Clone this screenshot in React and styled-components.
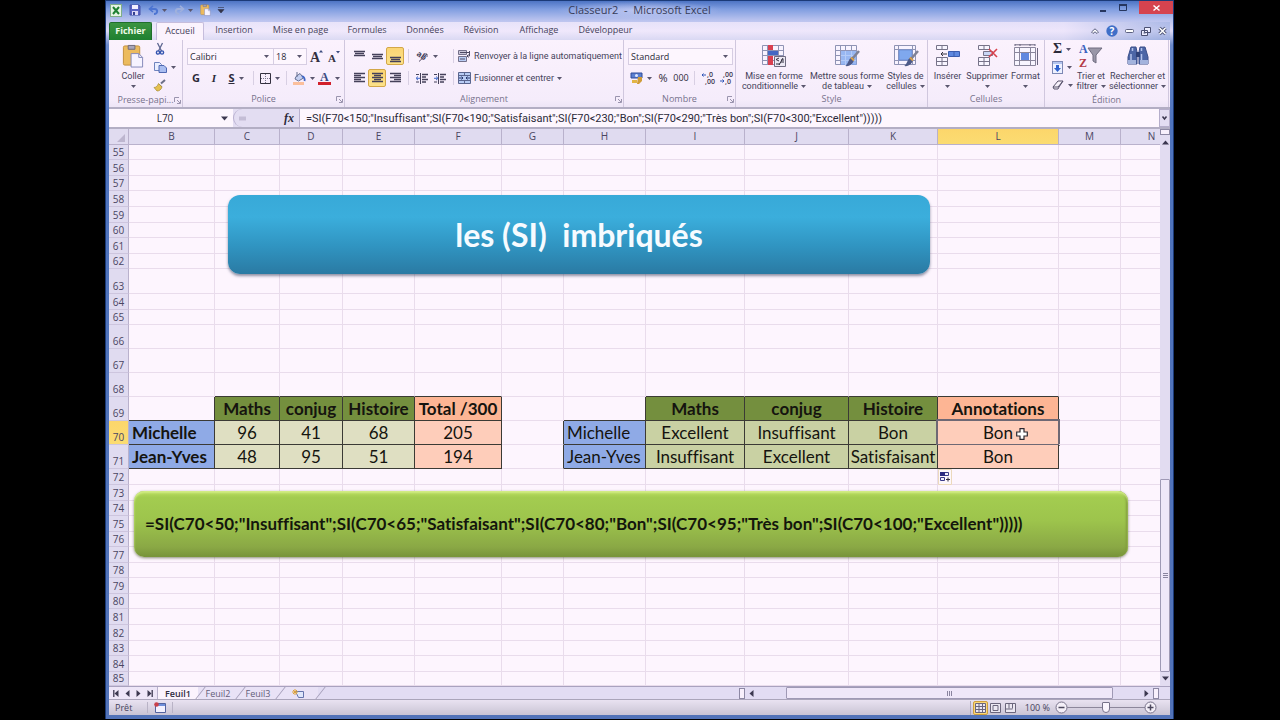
import React from 'react';
import styled, { createGlobalStyle, css } from 'styled-components';

const UI = '"Open Sans", "Noto Sans", sans-serif';
const LABEL = 'Roboto, "Open Sans", sans-serif';
const CALIBRI = 'Lato, "Open Sans", sans-serif';

const Global = createGlobalStyle`
  * { box-sizing: border-box; }
  html, body { margin: 0; background: #000; }
  body { font-family: ${UI}; font-size: 9px; color: #45425a; font-variant-ligatures: none; }
  button, input, select {
    font: inherit; color: inherit; margin: 0; padding: 0;
    border: 0; background: none; border-radius: 0; outline: 0;
  }
  svg { display: block; flex: none; overflow: visible; }
`;

/* ---------- frame ---------- */

const Stage = styled.div`
  min-height: 100vh;
  padding: 0 106px 1px 105px;
  background: #000;
  display: flex;
`;

const Window = styled.main`
  flex: 1;
  min-width: 0;
  display: flex;
  flex-direction: column;
  border: solid #1b3a78;
  border-width: 1px 1px 0;
  background: linear-gradient(#4d74c4 0, #7f9de0 8px, #b9c2ee 19px, #ded9f6 30px, #6c8aca 44px, #4f74be 120px, #5273b8);
`;

const TitleBar = styled.header`
  height: 21px;
  display: grid;
  grid-template-columns: 1fr auto 1fr;
  align-items: start;
`;

const QuickAccess = styled.div`
  display: flex;
  align-items: center;
  gap: 7px;
  height: 18px;
  padding-left: 4px;
`;

const Title = styled.h1`
  margin: 0;
  padding: 0 12px;
  font-size: 11px;
  font-weight: 400;
  line-height: 18px;
  white-space: pre;
  color: #363b58;
  background: radial-gradient(closest-side, rgba(225, 222, 250, 0.6), rgba(225, 222, 250, 0));
`;

const WindowButtons = styled.div`
  display: flex;
  justify-content: flex-end;
  align-items: center;
  height: 13px;
  gap: 12px;
`;

const PlainButton = styled.button`
  display: flex;
  align-items: center;
  justify-content: center;
  gap: 3px;
`;

const CloseButton = styled(PlainButton)`
  width: 34px;
  height: 13px;
  background: #d5434f;
`;

const Inner = styled.div`
  flex: 1;
  display: flex;
  flex-direction: column;
  padding: 0 3px 4px;
`;

/* ---------- ribbon ---------- */

const TabRow = styled.nav`
  display: flex;
  align-items: stretch;
  height: 18px;
  background: linear-gradient(90deg, rgba(250, 241, 254, 0.7), rgba(244, 235, 253, 0.7) 90%, rgba(160, 178, 226, 0.6));
`;

const tabKinds = {
  file: css`
    margin-right: 4px;
    color: #f1fbe9;
    font-weight: 700;
    background: linear-gradient(#3b9440, #1f8030);
    border: 1px solid #1f6f2b;
    border-bottom: 0;
    border-radius: 2px 2px 0 0;
  `,
  active: css`
    background: #fbf3fd;
    border: 1px solid #c6bddc;
    border-bottom: 0;
    border-radius: 2px 2px 0 0;
  `,
  idle: css`
    border: 1px solid transparent;
  `,
};

const Tab = styled.button`
  width: ${(p) => p.$w}px;
  && { padding-bottom: 2px; }
  line-height: 14px;
  font-size: 9px;
  white-space: nowrap;
  ${(p) => tabKinds[p.$kind || 'idle']}
`;

const TabTools = styled.div`
  margin-left: auto;
  display: flex;
  align-items: center;
  gap: 7px;
  padding-right: 3px;
`;

const Ribbon = styled.section`
  display: flex;
  height: 69px;
  background: linear-gradient(#fbf2fd, #f5ecfb 60px, #eee6f7 66px);
  border-bottom: 2px solid #b3aec4;
`;

const GroupBox = styled.section`
  width: ${(p) => p.$w}px;
  flex: none;
  display: flex;
  flex-direction: column;
  border-right: 1px solid #d0c7de;
`;

const GroupBody = styled.div`
  flex: 1;
  display: flex;
  padding: ${(p) => p.$pad || '0'};
  gap: ${(p) => p.$gap || 0}px;
`;

const GroupFoot = styled.footer`
  display: grid;
  grid-template-columns: 10px 1fr 10px;
  align-items: center;
  height: 14px;
  padding-bottom: 2px;
  line-height: 12px;
  text-align: center;
  font-size: 9px;
  color: #77728c;
  white-space: nowrap;
`;

const FootLabel = styled.span`
  grid-column: 2;
  margin: 0 -6px;
`;

const Stack = styled.div`
  display: flex;
  flex-direction: column;
  align-items: flex-start;
  gap: ${(p) => p.$gap || 0}px;
`;

const Line = styled.div`
  display: flex;
  align-items: center;
  height: 18px;
`;

const BigButton = styled.button`
  width: ${(p) => p.$w}px;
  display: flex;
  flex-direction: column;
  align-items: center;
  && {
    padding-top: 4px;
    font-family: ${LABEL};
    font-size: 9px;
    line-height: 10px;
  }
  white-space: nowrap;
`;

const BigLabel = styled.span`
  display: flex;
  align-items: center;
  justify-content: center;
  gap: 3px;
  height: 10px;
`;

const BigIcon = styled.span`
  height: 27px;
`;

const IconButton = styled.button`
  display: flex;
  align-items: center;
  justify-content: center;
  gap: 4px;
  height: 18px;
  width: ${(p) => p.$w || 18}px;
  ${(p) => p.$on && css`
    background: linear-gradient(#fbd574, #fce28a);
    border: 1px solid #d3a748;
    border-radius: 2px;
  `}
`;

const LabelButton = styled.button`
  display: flex;
  align-items: center;
  gap: 3px;
  height: 18px;
  font-family: ${LABEL};
  font-size: 9px;
  white-space: nowrap;
`;

const Glyph = styled.span`
  font-family: ${(p) => (p.$serif ? '"Liberation Serif", serif' : UI)};
  font-size: ${(p) => p.$size || 11}px;
  font-weight: ${(p) => (p.$bold ? 700 : 400)};
  font-style: ${(p) => (p.$italic ? 'italic' : 'normal')};
  text-decoration: ${(p) => (p.$under ? 'underline' : 'none')};
  line-height: 14px;
  color: #2c2a3a;
`;

const Rule = styled.span`
  width: 1px;
  height: 14px;
  margin: 0 4px;
  background: #d8cfe3;
`;

const SelectBox = styled.label`
  position: relative;
  width: ${(p) => p.$w}px;
  height: 17px;
  border: 1px solid #d6cde2;
  margin-right: -1px;
  background: #fdf6fe;
  color: #2c2a3a;
  select {
    width: 100%;
    height: 15px;
    padding-left: 2px;
    appearance: none;
    font-size: 9px;
  }
  svg {
    position: absolute;
    right: 4px;
    top: 6px;
    pointer-events: none;
  }
`;

/* ---------- formula bar ---------- */

const FormulaBar = styled.div`
  display: flex;
  height: 20px;
  border-bottom: 2px solid #b3aec4;
  background: #e3ddf2;
`;

const NameBox = styled.label`
  display: flex;
  align-items: center;
  width: 124px;
  background: #fdf6fe;
  padding-right: 4px;
  input {
    width: 112px;
    text-align: center;
    font-size: 10px;
    color: #2c2a3a;
  }
`;

const FxArea = styled.div`
  display: flex;
  align-items: center;
  justify-content: space-between;
  width: 67px;
  padding: 0 5px;
  border: 1px solid #b9b0cf;
  border-width: 0 1px 0 1px;
  border-radius: 9px 0 0 9px;
`;

const FormulaInput = styled.input`
  flex: 1;
  min-width: 0;
  && {
    padding-left: 6px;
    background: #fdf6fe;
    font-family: ${LABEL};
    font-size: 11px;
    color: #2c2a3a;
  }
`;

const Expand = styled(PlainButton)`
  && {
    width: 11px;
    border: 1px solid #b5aecb;
  }
`;

/* ---------- sheet ---------- */

const SheetArea = styled.section`
  display: flex;
  flex: 1;
  min-height: 0;
  background: #fdf5fe;
`;

const Canvas = styled.div`
  position: relative;
  flex: 1;
  min-width: 0;
  overflow: hidden;
`;

const Grid = styled.table`
  width: 100%;
  table-layout: fixed;
  border-spacing: 0;
  border-collapse: separate;
`;

const headBase = css`
  padding: 0;
  font-size: 10px;
  font-weight: 400;
  color: #4a4662;
  border: solid #b9b1cc;
  border-width: 0 1px 1px 0;
  overflow: hidden;
  background: ${(p) => (p.$on ? 'linear-gradient(#fcd66b, #fbdc72)' : '#e0dbf0')};
`;

const ColHead = styled.th`
  ${headBase}
  height: 16px;
  line-height: 15px;
`;

const RowHead = styled.th`
  ${headBase}
  height: ${(p) => p.$h}px;
  line-height: 13px;
  vertical-align: bottom;
  border-bottom-color: #cdc5de;
`;

const fills = {
  name: '#8faae6',
  head: '#748f3e',
  mark: '#dfdfc2',
  grade: '#c9d1a3',
  totalHead: '#fdb594',
  total: '#fecdba',
};

const Cell = styled.td`
  padding: ${(p) => (p.$fill === 'name' ? '0 0 0 3px' : '0')};
  position: relative;
  border-style: solid;
  border-width: 0 1px 1px 0;
  border-color: transparent ${(p) => (p.$dr ? '#3b3a35' : '#e9dcec')} ${(p) => (p.$db ? '#3b3a35' : '#e9dcec')} transparent;
  background: ${(p) => fills[p.$fill] || 'transparent'};
  font-family: ${CALIBRI};
  font-size: 17px;
  line-height: 22px;
  font-weight: ${(p) => (p.$bold ? 700 : 400)};
  text-align: ${(p) => (p.$fill === 'name' ? 'left' : 'center')};
  white-space: nowrap;
  color: #15140f;
  ${(p) => p.$sel && css`
    &::after {
      content: '';
      position: absolute;
      inset: -2px;
      border: 2px solid #6e6874;
    }
  `}
`;

const Filler = styled.td`
  padding: 0;
`;

const Banner = styled.div`
  position: absolute;
  left: 119px;
  top: 66px;
  width: 702px;
  height: 79px;
  border-radius: 12px;
  background: linear-gradient(#38a9d8 0, #3baedc 28%, #3094c1 65%, #2a7aa3);
  box-shadow: 0 2px 3px rgba(50, 60, 90, 0.55);
  color: #f6fbff;
  font: 700 32px/79px ${CALIBRI};
  text-align: center;
  white-space: pre;
`;

const Callout = styled.div`
  position: absolute;
  left: 25px;
  top: 362px;
  width: 994px;
  height: 66px;
  padding-left: 11px;
  border-radius: 10px;
  background: linear-gradient(#b9dc60 0, #a3cc50 10%, #9dc44c 45%, #8aa845 85%, #77933a);
  box-shadow: 0 1px 3px rgba(60, 70, 30, 0.6), inset 0 2px 2px #d3ee86, inset -2px 0 2px #7d9a3b;
  color: #14160c;
  font: 700 17px/66px ${CALIBRI};
  font-variant-ligatures: none;
  white-space: nowrap;
`;

const Floating = styled.span`
  position: absolute;
  left: ${(p) => p.$x}px;
  top: ${(p) => p.$y}px;
`;

const VScroll = styled.div`
  width: 10px;
  display: flex;
  flex-direction: column;
  align-items: center;
  padding-bottom: 4px;
  background: #e2dcf1;
`;

const VSplit = styled.span`
  width: 10px;
  height: 6px;
  margin-bottom: 4px;
  border: 1px solid #8d88a4;
  background: #f8f0fc;
`;

const VTrack = styled.div`
  flex: 1;
  width: 10px;
  padding: 333px 0 3px;
  display: flex;
`;

const Thumb = styled.div`
  flex: 1;
  display: flex;
  align-items: center;
  justify-content: center;
  border: 1px solid #9f99b5;
  border-radius: 1px;
  background: #efe7f9;
`;

/* ---------- sheet tabs and status ---------- */

const TabBar = styled.div`
  display: flex;
  height: 13px;
  border-top: 1px solid #a9a2bf;
  background: #e2dcf3;
`;

const NavButtons = styled.div`
  width: 49px;
  display: flex;
  align-items: center;
  justify-content: space-evenly;
  border-right: 1px solid #b9b1cc;
  background: #eee6f8;
`;

const SheetTab = styled.button`
  && {
    position: relative;
    width: 40px;
    font-size: 9px;
    line-height: 11px;
    color: ${(p) => (p.$on ? '#2f2c40' : '#625d78')};
    font-weight: ${(p) => (p.$on ? 600 : 400)};
    background: ${(p) => (p.$on ? '#fbf3fd' : '#e9e2f6')};
    display: flex;
    align-items: center;
    justify-content: center;
  }
  &::after {
    content: '';
    position: absolute;
    z-index: 1;
    right: -3px;
    top: 0;
    width: 5px;
    height: 12px;
    transform: skewX(-38deg);
    border-right: 1px solid #a39cb8;
  }
`;

const HScroll = styled.div`
  margin-left: auto;
  width: 431px;
  display: flex;
  align-items: center;
  gap: 3px;
  padding-right: 11px;
`;

const Grip = styled.span`
  width: 6px;
  height: 11px;
  border: 1px solid #8d88a4;
  background: #f8f0fc;
`;

const HTrack = styled.div`
  flex: 1;
  height: 12px;
  display: flex;
  padding: 0 27px 0 28px;
`;

const Status = styled.footer`
  display: flex;
  align-items: center;
  height: 16px;
  padding-left: 6px;
  border-top: 1px solid #aaa4ba;
  background: linear-gradient(#e9e2f1, #c9c4d4);
  font-size: 9px;
`;

const MacroArea = styled.span`
  margin-left: 15px;
  padding: 0 6px;
  border: solid #b9b3c6;
  border-width: 0 1px;
`;

const ViewButtons = styled.div`
  margin-left: auto;
  display: flex;
  align-items: center;
  padding-left: 2px;
  border-left: 1px solid #aaa4ba;
`;

const ViewButton = styled(PlainButton)`
  && {
    width: 15px;
    height: 14px;
    ${(p) => p.$on && css`
      background: #fbd878;
      border: 1px solid #cf9f3e;
      border-radius: 2px;
    `}
  }
`;

const Zoom = styled.label`
  display: flex;
  align-items: center;
  gap: 5px;
  margin: 0 13px 0 7px;
  input {
    width: 78px;
    height: 12px;
    margin: 0 -6px;
    appearance: none;
    background: linear-gradient(#8d879b, #8d879b) center / 100% 1px no-repeat;
  }
  input::-webkit-slider-thumb {
    appearance: none;
    width: 8px;
    height: 11px;
    border: 1px solid #77728a;
    border-radius: 1px 1px 4px 4px;
    background: #faf5fd;
  }
`;

/* ---------- drawings ---------- */

const Svg = ({ w, h, children, box }) => (
  <svg width={w} height={h} viewBox={box || `0 0 ${w} ${h}`} fill="none" aria-hidden="true">{children}</svg>
);

const Caret = () => <Svg w={5} h={3}><path d="M0 0h5L2.500 3z" fill="#5a566e" /></Svg>;
const Arrow = ({ dir, bar }) => (
  <Svg w={7} h={7}>
    <g transform={`rotate(${{ up: 0, right: 90, down: 180, left: 270 }[dir]} 3.5 3.5)`}>
      <path d="M0 5.500L3.500 1.500L7 5.500z" fill="#3c3850" />
      {bar && <path d="M0 .8h7" stroke="#3c3850" strokeWidth="1.300" />}
    </g>
  </Svg>
);
const LauncherIcon = () => (
  <Svg w={7} h={7}><path d="M.5 5V.5H5M3 3l3 3M6.500 3v3.500H3" stroke="#9a94ae" /></Svg>
);

const ExcelLogo = () => (
  <Svg w={12} h={13}>
    <rect x=".5" y=".5" width="11" height="12" fill="#e6f4e4" stroke="#7fae88" />
    <path d="M3 3l6 7M9 3L3 10" stroke="#1f8032" strokeWidth="2" />
  </Svg>
);
const Save = () => (
  <Svg w={12} h={12}>
    <path d="M1 1h9l1 1v9H1z" fill="#5a63c4" stroke="#4550a6" />
    <path d="M3 1h6v4H3z" fill="#f4f0ff" /><path d="M3 7h6v4H3z" fill="#dcd8f5" /><path d="M4 8h2v3H4z" fill="#35408f" />
  </Svg>
);
const Undo = ({ pale, flip }) => (
  <Svg w={11} h={10}>
    <g transform={flip ? 'translate(11 0) scale(-1 1)' : undefined} stroke={pale ? '#9fb0dc' : '#4c74d2'}>
      <path d="M2 4h5c3 0 3 5-1 5" strokeWidth="2" /><path d="M5 .8L1.500 4L5 7" strokeWidth="1.600" />
    </g>
  </Svg>
);
const Paste = ({ s = 1 }) => (
  <Svg w={22 * s} h={24 * s} box="0 0 22 25">
    <rect x="1" y="2" width="17" height="20" rx="1.500" fill="#ecbb5e" stroke="#c18f3c" />
    <path d="M6 1.500h7v4H6z" fill="#a9a6b8" stroke="#6d6a7c" />
    <path d="M9 10h8l4 4v10H9z" fill="#f6f3ff" stroke="#8387b8" />
    <path d="M17 10v4h4" stroke="#8387b8" />
  </Svg>
);
const Cut = () => (
  <Svg w={10} h={12}>
    <path d="M2.500 0l4 8M7.500 0L3.500 8" stroke="#5d6690" strokeWidth="1.300" />
    <circle cx="3" cy="9.500" r="1.600" stroke="#3354b0" strokeWidth="1.400" /><circle cx="7" cy="9.500" r="1.600" stroke="#3354b0" strokeWidth="1.400" />
  </Svg>
);
const Copy = () => (
  <Svg w={13} h={11}>
    <path d="M.5.5h5l2 2v6h-7z" fill="#e9edff" stroke="#6f83bd" />
    <path d="M5 3.500h5l2.500 2.500v4.500H5z" fill="#a9bdf0" stroke="#4f68b2" />
  </Svg>
);
const Brush = () => (
  <Svg w={12} h={11}>
    <path d="M11 0L7 3.500" stroke="#6b6f87" strokeWidth="2" /><path d="M4.500 3.500l4 3L6 8z" fill="#8b91a8" />
    <path d="M4.500 3.500L8 7c-1 3-3 4-5 4L0 7.500c2 0 3.500-1.500 4.500-4z" fill="#e5c04f" stroke="#a48a32" strokeWidth=".7" />
  </Svg>
);
const SizeA = ({ size, down }) => (
  <Svg w={14} h={14}>
    <text x="0" y="13" fontFamily="Liberation Serif, serif" fontWeight="700" fontSize={size} fill="#33303f">A</text>
    <path d={down ? 'M8 2h4l-2 2.500z' : 'M9 3.500h4L11 1z'} fill="#3c4c7e" />
  </Svg>
);
const BorderIcon = () => (
  <Svg w={11} h={11}><path d="M.5.5h10v10H.5z" stroke="#33303f" /><path d="M5.500 1v9M1 5.500h9" stroke="#77738a" strokeDasharray="1 1" /></Svg>
);
const Bucket = () => (
  <Svg w={14} h={13}>
    <path d="M4 4.500L8 1.500L11.500 6L6.500 9L3 7z" fill="#c5cff0" stroke="#667092" />
    <path d="M10 4c2 1 3 3 2.500 5" stroke="#3f66c4" strokeWidth="1.800" /><path d="M5 0v5" stroke="#667092" /><path d="M1 10h11v3H1z" fill="#fbbf9c" />
  </Svg>
);
const FontColor = () => (
  <Svg w={13} h={13}>
    <text x="2" y="9" fontFamily="Liberation Serif, serif" fontWeight="700" fontSize="12" fill="#3a4a80">A</text>
    <path d="M0 10h13v3H0z" fill="#d2202c" />
  </Svg>
);
const Lines = ({ rows, y = 0 }) => (
  <Svg w={11} h={13}>
    {rows.map(([x, w], i) => <path key={i} d={`M${x} ${y + i * 2 + 0.5}h${w}`} stroke="#45415a" strokeWidth="1.500" />)}
  </Svg>
);
const Orient = () => (
  <Svg w={13} h={12}>
    <text x="0" y="7" fontFamily="Open Sans" fontSize="8" fontWeight="700" fill="#45415a" transform="rotate(35 3 6)">ab</text>
    <path d="M3 11.500L11 4M11 4v3M11 4H8" stroke="#56516a" />
  </Svg>
);
const Indent = ({ flip }) => (
  <Svg w={12} h={11}>
    <path d="M4.500 0v11M0 1.500h3M0 9h3" stroke="#45415a" />
    <path d="M6 1.500h6M6 4h4M6 6.500h6M6 9h4" stroke="#45415a" strokeWidth="1.600" />
    <path d={flip ? 'M0 5.300h3M2 3.500l2 1.800l-2 1.800' : 'M1 5.300h3M2 3.500L0 5.300l2 1.800'} stroke="#3c66c8" />
  </Svg>
);
const Wrap = () => (
  <Svg w={13} h={12}>
    <path d="M.5.5h8v4h-8z" fill="#c9c5d8" stroke="#74708a" /><path d="M.5 6.500h8v5h-8z" fill="#b9cdf5" stroke="#74708a" />
    <path d="M2 2.500h9M2 9h5" stroke="#4d4962" /><path d="M11.500 1v5H9M10.500 4.500L9 6L10.500 7.500" stroke="#4d4962" />
  </Svg>
);
const Merge = () => (
  <Svg w={13} h={12}>
    <path d="M.5.5h12v11H.5z" fill="#b9cdf5" stroke="#5a668f" /><path d="M.5 3.500h12M.5 8.500h12M6.500 0v3.500M6.500 8.500V12" stroke="#5a668f" />
    <path d="M1 6h4M8 6h4M3.500 4.500L5 6L3.500 7.500M9.500 4.500L8 6l1.500 1.500" stroke="#27386f" />
  </Svg>
);
const Currency = () => (
  <Svg w={13} h={12}>
    <path d="M1 1h11v5H1z" fill="#5a7fd0" stroke="#2f4d9a" /><circle cx="6.500" cy="3.500" r="1.500" fill="#dfe8ff" />
    <path d="M2 8h5v3H2z" fill="#e2b545" /><path d="M8 5h4v4l-3 3H7z" fill="#cf9c38" />
  </Svg>
);
const Decimals = ({ less }) => (
  <Svg w={12} h={12}>
    <text x={less ? 3 : 5} y="5" fontFamily="Open Sans" fontSize="7" fontWeight="600" fill="#3c3850">{less ? ',00' : ',0'}</text>
    <text x={less ? 5 : 3} y="12" fontFamily="Open Sans" fontSize="7" fontWeight="600" fill="#3c3850">{less ? ',0' : ',00'}</text>
    <path d={less ? 'M0 9h4M2.500 7.500L4 9l-1.500 1.500' : 'M0 3h4M1.500 1.500L0 3l1.500 1.500'} stroke="#3157b8" />
  </Svg>
);
const gridLines = 'M.5 1.500h21v19H.5zM.5 6.500h21M.5 11.500h21M.5 16.500h21M5.500 1.500v19M10.500 1.500v19M16.500 1.500v19';
const CondFormat = () => (
  <Svg w={24} h={24}>
    <path d={gridLines} fill="#f8f3ff" stroke="#8f93b4" />
    <path d="M6 1h5v5H6zM6 12h5v9H6z" fill="#d94050" /><path d="M6 7h10v4H6z" fill="#4468c4" />
    <path d="M12.500 12.500h11v10h-11z" fill="#ece9f4" stroke="#6f6b80" /><path d="M17 14l-3 1.500l3 1.500M14 20h4M19 16h3M19 18h3M21 14l-4 7" stroke="#2f2c3c" />
  </Svg>
);
const PaintBrush = () => (
  <g><path d="M24 7l-7 8" stroke="#7f8296" strokeWidth="2.500" /><path d="M17 13l2 2c0 4-4 8-9 7c3-1 3-7 7-9z" fill="#4d5a88" /><path d="M16 13.500l3 3" stroke="#d9a24c" strokeWidth="2" /></g>
);
const TableFormat = () => (
  <Svg w={24} h={24}>
    <path d={gridLines} fill="#f8f3ff" stroke="#8f93b4" /><path d="M6 7h15.500v14H6z" fill="#7fa8ee" fillOpacity=".8" />
    <path d="M6 11.500h15M6 16.500h15M10.500 7v14M16.500 7v14" stroke="#b4cbf7" /><PaintBrush />
  </Svg>
);
const CellStyles = () => (
  <Svg w={24} h={24}>
    <path d="M.5 1.500h21v19H.5zM4.500 1.500v19M.5 5.500h21M.5 16.500h21M18.500 1.500v19" fill="#f8f3ff" stroke="#8f93b4" />
    <path d="M5 6h13v10H5z" fill="#7fa8ee" stroke="#6f8fd4" /><PaintBrush />
  </Svg>
);
const InsertCells = () => (
  <Svg w={24} h={24}>
    <path d="M.5 1.500h11v4H.5zM.5 13.500h11v8H.5zM6 1.500v4M6 13.500v8M.5 17.500h11" fill="#f8f5ff" stroke="#777389" />
    <path d="M12.500 7.500h11v5h-11z" fill="#5f88e0" stroke="#3c5cae" /><path d="M18 8v4" stroke="#3c5cae" /><path d="M5 10h6M7 8l-2 2l2 2" stroke="#33303f" />
  </Svg>
);
const DeleteCells = () => (
  <Svg w={24} h={24}>
    <path d="M3.500 1.500h11v4h-11zM3.500 13.500h11v8h-11zM9 1.500v4M9 13.500v8M3.500 17.500h11" fill="#f8f5ff" stroke="#777389" />
    <path d="M8.500 7.500h9v4h-9z" fill="#c9d6f5" stroke="#777389" /><path d="M14 5l8 8M22 5l-8 8" stroke="#d8414c" strokeWidth="1.600" />
  </Svg>
);
const FormatCells = () => (
  <Svg w={24} h={24}>
    <path d="M.5 3.500h21v18H.5zM5.500 3.500v18M16.500 3.500v18M.5 8.500h21M.5 16.500h21" fill="#f8f5ff" stroke="#8a869c" />
    <path d="M7 9h8v7H7z" fill="#5f88e0" /><path d="M1 .8h20M1 0v2M6 0v2M16 0v2M21 0v2M23.500 4v17" stroke="#6b6780" />
  </Svg>
);
const Fill = () => (
  <Svg w={11} h={13}><rect x=".5" y=".5" width="10" height="12" fill="#eef1ff" stroke="#7d88b4" /><path d="M1 1h9v2H1z" fill="#b3c4ef" /><path d="M4 4h3v3h2l-3.500 4L2 7h2z" fill="#2f62cf" /></Svg>
);
const Eraser = () => (
  <Svg w={12} h={10}><path d="M1 7l5-6h5L7 7l-1 2H2z" fill="#f7f1fb" stroke="#56516a" /><path d="M1 7h5l5-6" stroke="#56516a" /></Svg>
);
const SortFilter = () => (
  <Svg w={24} h={24}>
    <path d="M9 4h14l-6 7v8l-3-2v-6z" fill="#9a97a8" stroke="#706d80" />
    <text x="0" y="9" fontFamily="Liberation Serif, serif" fontWeight="700" fontSize="12" fill="#3a62bf">A</text>
    <text x="0" y="23" fontFamily="Liberation Serif, serif" fontWeight="700" fontSize="12" fill="#b33a48">Z</text>
  </Svg>
);
const Binoculars = () => (
  <Svg w={24} h={24}>
    <path d="M5 3h5l1 5v12H2v-7z" fill="#4c66a6" stroke="#3a4f8a" /><path d="M13 8l1-5h5l3 10v7h-9z" fill="#4c66a6" stroke="#3a4f8a" />
    <path d="M10 8h4v5h-4z" fill="#2e4178" /><path d="M5 10v6M15.500 10v6M6.500 4v3M15.500 4v3" stroke="#b4c4ec" strokeWidth="1.500" /><path d="M2 16h8v4H2zM14 16h8v4h-8z" fill="#a3b3dd" />
  </Svg>
);
const NewSheet = () => (
  <Svg w={12} h={9}><path d="M3.500 2.500h8v6h-5z" fill="#dfe6fb" stroke="#6474ac" /><path d="M3 0v6M0 3h6M1 1l4 4M5 1L1 5" stroke="#dda33b" /></Svg>
);
const Macro = () => (
  <Svg w={12} h={11}><path d="M1.500 1.500h10v9h-10z" fill="#f3f1ff" stroke="#53639f" /><path d="M2 2h9v2H2z" fill="#6f8fda" /><circle cx="2.500" cy="2.500" r="2.300" fill="#c9404b" /></Svg>
);
const ViewGlyph = ({ kind }) => (
  <Svg w={11} h={10}>
    <path d="M.5.5h10v9H.5z" fill="#ece8f2" stroke="#6b667c" />
    <path d={{ grid: 'M.5 3.500h10M.5 6.500h10M4 .5v9M7.500 .5v9', page: 'M3 2.500h5v5H3z', break: 'M4 .5v5M7.500 .5v5M.5 6h7' }[kind]} stroke="#6b667c" />
  </Svg>
);
const RoundSign = ({ plus }) => (
  <Svg w={13} h={13}><circle cx="6.500" cy="6.500" r="5.500" fill="#f4eff8" stroke="#77728a" /><path d={plus ? 'M3.500 6.500h6M6.500 3.500v6' : 'M3.500 6.500h6'} stroke="#4c485e" strokeWidth="1.500" /></Svg>
);
const PasteOptions = () => (
  <Svg w={14} h={16}>
    <path d="M.5.5h13v15H.5z" fill="#fdf7fb" stroke="#ecd9bd" />
    <path d="M2.500 3.500h4v3h-4zM2.500 8.500h4v3h-4zM6.500 3.500h4v3h-4z" fill="#f1efff" stroke="#3c3a88" /><path d="M2 3h5v4H2z" fill="#2b2980" /><path d="M8 10.500h4M10 8.500v4" stroke="#2e2b40" />
  </Svg>
);
const CrossCursor = () => (
  <Svg w={12} h={12}><path d="M4 .7h4V4h3.300v4H8v3.300H4V8H.7V4H4z" fill="#fff" stroke="#2c2830" strokeWidth="1.200" /></Svg>
);

/* ---------- data ---------- */

const columns = [['B', 86], ['C', 65], ['D', 63], ['E', 72], ['F', 87], ['G', 62], ['H', 82], ['I', 99], ['J', 104], ['K', 89], ['L', 121], ['M', 62], ['N', 62]];
const rowHeights = [15, 16, 15, 16, 16, 15, 16, 15, 25, 16, 15, 24, 24, 24, 24, 24, 24, 16, 16, 15, 16, 15, 16, 15, 16, 15, 16, 16, 15, 16, 14];

const cells = {
  C69: ['Maths', 'head', 1], D69: ['conjug', 'head', 1], E69: ['Histoire', 'head', 1], F69: ['Total /300', 'totalHead', 1],
  I69: ['Maths', 'head', 1], J69: ['conjug', 'head', 1], K69: ['Histoire', 'head', 1], L69: ['Annotations', 'totalHead', 1],
  B70: ['Michelle', 'name', 1], C70: ['96', 'mark'], D70: ['41', 'mark'], E70: ['68', 'mark'], F70: ['205', 'total'],
  H70: ['Michelle', 'name'], I70: ['Excellent', 'grade'], J70: ['Insuffisant', 'grade'], K70: ['Bon', 'grade'], L70: ['Bon', 'total'],
  B71: ['Jean-Yves', 'name', 1], C71: ['48', 'mark'], D71: ['95', 'mark'], E71: ['51', 'mark'], F71: ['194', 'total'],
  H71: ['Jean-Yves', 'name'], I71: ['Insuffisant', 'grade'], J71: ['Excellent', 'grade'], K71: ['Satisfaisant', 'grade'], L71: ['Bon', 'total'],
};

const barFormula = '=SI(F70<150;"Insuffisant";SI(F70<190;"Satisfaisant";SI(F70<230;"Bon";SI(F70<290;"Très bon";SI(F70<300;"Excellent")))))';
const calloutFormula = '=SI(C70<50;"Insuffisant";SI(C70<65;"Satisfaisant";SI(C70<80;"Bon";SI(C70<95;"Très bon";SI(C70<100;"Excellent")))))';

const tabs = [['Fichier', 43, 'file'], ['Accueil', 48, 'active'], ['Insertion', 60], ['Mise en page', 73], ['Formules', 60], ['Données', 56], ['Révision', 56], ['Affichage', 60], ['Développeur', 73]];

/* ---------- parts ---------- */

const Group = ({ w, label, launcher, pad, gap, children }) => (
  <GroupBox $w={w}>
    <GroupBody $pad={pad} $gap={gap}>{children}</GroupBody>
    <GroupFoot><FootLabel>{label}</FootLabel>{launcher && <PlainButton aria-label={`Options ${label}`}><LauncherIcon /></PlainButton>}</GroupFoot>
  </GroupBox>
);

const Big = ({ w, icon, lines, caretBelow }) => (
  <BigButton $w={w}>
    <BigIcon>{icon}</BigIcon>
    {lines.map((t, i) => (
      <BigLabel key={t}>{t}{!caretBelow && i === lines.length - 1 && <Caret />}</BigLabel>
    ))}
    {caretBelow && <BigLabel><Caret /></BigLabel>}
  </BigButton>
);

const Picker = ({ w, label, value }) => (
  <SelectBox $w={w}>
    <select aria-label={label} defaultValue={value}><option>{value}</option></select>
    <Caret />
  </SelectBox>
);

const bars = [[0, 11], [1, 9], [0, 11]];

export default function App() {
  return (
    <>
      <Global />
      <Stage>
        <Window>
          <TitleBar>
            <QuickAccess>
              <ExcelLogo />
              <PlainButton aria-label="Enregistrer"><Save /></PlainButton>
              <PlainButton aria-label="Annuler"><Undo /><Caret /></PlainButton>
              <PlainButton aria-label="Rétablir"><Undo pale flip /><Caret /></PlainButton>
              <PlainButton aria-label="Coller"><Paste s={0.5} /></PlainButton>
              <PlainButton aria-label="Personnaliser"><Svg w={6} h={6}><path d="M0 .5h6M0 2.500h6L3 6z" stroke="#33344a" strokeWidth=".6" fill="#33344a" /></Svg></PlainButton>
            </QuickAccess>
            <Title>Classeur2  -  Microsoft Excel</Title>
            <WindowButtons>
              <PlainButton aria-label="Réduire"><Svg w={8} h={8}><path d="M1 7h6" stroke="#26365f" strokeWidth="2" /></Svg></PlainButton>
              <PlainButton aria-label="Agrandir"><Svg w={8} h={7}><path d="M.5 1h7v5.500h-7z" stroke="#26365f" /><path d="M0 1h8" stroke="#26365f" strokeWidth="2" /></Svg></PlainButton>
              <CloseButton aria-label="Fermer"><Svg w={7} h={6}><path d="M.5.5l6 5M6.500.5l-6 5" stroke="#fff" strokeWidth="1.500" /></Svg></CloseButton>
            </WindowButtons>
          </TitleBar>

          <Inner>
            <TabRow>
              {tabs.map(([t, w, kind]) => <Tab key={t} $w={w} $kind={kind}>{t}</Tab>)}
              <TabTools>
                <PlainButton aria-label="Réduire le ruban"><Svg w={8} h={6}><path d="M.5 4L4 .8L7.500 4L6 5.500L4 3.800L2 5.500z" fill="#fff" stroke="#5b6080" /></Svg></PlainButton>
                <PlainButton aria-label="Aide"><Svg w={12} h={12}><circle cx="6" cy="6" r="5.700" fill="#3f6fc8" /><text x="3.500" y="9.500" fontFamily="Open Sans" fontSize="10" fontWeight="700" fill="#fff">?</text></Svg></PlainButton>
                <PlainButton aria-label="Réduire le classeur"><Svg w={9} h={4}><rect x=".5" y=".5" width="8" height="3" rx="1" fill="#fff" stroke="#5b6080" /></Svg></PlainButton>
                <PlainButton aria-label="Restaurer le classeur"><Svg w={10} h={9}><path d="M3.500.5h6v5h-6zM.5 3.500h6v5h-6zM2.500 6h2" fill="#eef" stroke="#4b5072" /></Svg></PlainButton>
                <PlainButton aria-label="Fermer le classeur"><Svg w={9} h={8}><path d="M1.500 1l6 6M7.500 1l-6 6" stroke="#4b5072" strokeWidth="3.200" /><path d="M1.500 1l6 6M7.500 1l-6 6" stroke="#fff" strokeWidth="1.600" /></Svg></PlainButton>
              </TabTools>
            </TabRow>

            <Ribbon>
              <Group w={74} label="Presse-papi..." launcher pad="0 0 0 5px" gap={2}>
                <Big w={38} icon={<Paste />} lines={['Coller']} caretBelow />
                <Stack>
                  <IconButton aria-label="Couper" $w={12}><Cut /></IconButton>
                  <IconButton aria-label="Copier" $w={22}><Copy /><Caret /></IconButton>
                  <IconButton aria-label="Reproduire" $w={12}><Brush /></IconButton>
                </Stack>
              </Group>

              <Group w={162} label="Police" launcher pad="7px 0 0 4px">
                <Stack $gap={4}>
                  <Line>
                    <Picker w={87} label="Police" value="Calibri" />
                    <Picker w={34} label="Taille" value="18" />
                    <IconButton aria-label="Agrandir la police" $w={22}><SizeA size={14} /></IconButton>
                    <IconButton aria-label="Réduire la police" $w={14}><SizeA size={11} down /></IconButton>
                  </Line>
                  <Line>
                    <IconButton aria-label="Gras"><Glyph $bold>G</Glyph></IconButton>
                    <IconButton aria-label="Italique"><Glyph $serif $italic $bold>I</Glyph></IconButton>
                    <IconButton aria-label="Souligné" $w={26}><Glyph $bold $under>S</Glyph><Caret /></IconButton>
                    <Rule />
                    <IconButton aria-label="Bordures" $w={24}><BorderIcon /><Caret /></IconButton>
                    <Rule />
                    <IconButton aria-label="Remplissage" $w={25}><Bucket /><Caret /></IconButton>
                    <IconButton aria-label="Couleur" $w={26}><FontColor /><Caret /></IconButton>
                  </Line>
                </Stack>
              </Group>

              <Group w={279} label="Alignement" launcher pad="7px 0 0 5px">
                <Stack $gap={4}>
                  <Line>
                    <IconButton aria-label="Haut"><Lines rows={bars} y={1} /></IconButton>
                    <IconButton aria-label="Milieu"><Lines rows={bars} y={4} /></IconButton>
                    <IconButton aria-label="Bas" $on><Lines rows={bars} y={7} /></IconButton>
                    <Rule />
                    <IconButton aria-label="Orientation" $w={28}><Orient /><Caret /></IconButton>
                  </Line>
                  <Line>
                    <IconButton aria-label="Gauche"><Lines rows={[[0, 11], [0, 7], [0, 11], [0, 7], [0, 11]]} y={1} /></IconButton>
                    <IconButton aria-label="Centre" $on><Lines rows={[[0, 11], [2, 7], [0, 11], [2, 7], [0, 11]]} y={1} /></IconButton>
                    <IconButton aria-label="Droite"><Lines rows={[[0, 11], [4, 7], [0, 11], [4, 7], [0, 11]]} y={1} /></IconButton>
                    <Rule />
                    <IconButton aria-label="Diminuer le retrait"><Indent /></IconButton>
                    <IconButton aria-label="Augmenter le retrait"><Indent flip /></IconButton>
                  </Line>
                </Stack>
                <Stack $gap={4}>
                  <Line><Rule /><LabelButton><Wrap />Renvoyer à la ligne automatiquement</LabelButton></Line>
                  <Line><Rule /><LabelButton><Merge />Fusionner et centrer <Caret /></LabelButton></Line>
                </Stack>
              </Group>

              <Group w={112} label="Nombre" launcher pad="7px 0 0 4px">
                <Stack $gap={4}>
                  <Line><Picker w={105} label="Format de nombre" value="Standard" /></Line>
                  <Line>
                    <IconButton aria-label="Monétaire" $w={26}><Currency /><Caret /></IconButton>
                    <IconButton aria-label="Pourcentage"><Glyph>%</Glyph></IconButton>
                    <IconButton aria-label="Milliers"><Glyph $size={9}>000</Glyph></IconButton>
                    <Rule />
                    <IconButton aria-label="Ajouter une décimale"><Decimals /></IconButton>
                    <IconButton aria-label="Réduire les décimales"><Decimals less /></IconButton>
                  </Line>
                </Stack>
              </Group>

              <Group w={192} label="Style" pad="0 0 0 2px">
                <Big w={72} icon={<CondFormat />} lines={['Mise en forme', 'conditionnelle']} />
                <Big w={74} icon={<TableFormat />} lines={['Mettre sous forme', 'de tableau']} />
                <Big w={43} icon={<CellStyles />} lines={['Styles de', 'cellules']} />
              </Group>

              <Group w={117} label="Cellules">
                <Big w={39} icon={<InsertCells />} lines={['Insérer']} caretBelow />
                <Big w={40} icon={<DeleteCells />} lines={['Supprimer']} caretBelow />
                <Big w={37} icon={<FormatCells />} lines={['Format']} caretBelow />
              </Group>

              <Group w={124} label="Édition" pad="0 0 0 5px">
                <Stack>
                  <IconButton aria-label="Somme" $w={24}><Glyph $serif $bold $size={14}>Σ</Glyph><Caret /></IconButton>
                  <IconButton aria-label="Remplir" $w={24}><Fill /><Caret /></IconButton>
                  <IconButton aria-label="Effacer" $w={24}><Eraser /><Caret /></IconButton>
                </Stack>
                <Big w={34} icon={<SortFilter />} lines={['Trier et', 'filtrer']} />
                <Big w={59} icon={<Binoculars />} lines={['Rechercher et', 'sélectionner']} />
              </Group>
            </Ribbon>

            <FormulaBar>
              <NameBox><input aria-label="Zone Nom" defaultValue="L70" /><Arrow dir="down" /></NameBox>
              <FxArea>
                <Svg w={7} h={5}><path d="M0 .5h7v4H0z" fill="#c4bdd6" /></Svg>
                <PlainButton aria-label="Insérer une fonction"><Glyph $serif $italic $bold $size={12}>fx</Glyph></PlainButton>
              </FxArea>
              <FormulaInput aria-label="Barre de formule" defaultValue={barFormula} />
              <Expand aria-label="Développer la barre"><Svg w={5} h={4}><path d="M.5.5l2 2.500l2-2.500" stroke="#3c3850" strokeWidth="1.500" /></Svg></Expand>
            </FormulaBar>

            <SheetArea>
              <Canvas>
                <Grid>
                  <colgroup>
                    <col width="20" />
                    {columns.map(([c, w]) => <col key={c} width={w} />)}
                    <col />
                  </colgroup>
                  <thead>
                    <tr>
                      <ColHead aria-label="Tout sélectionner"><Svg w={19} h={15}><path d="M16 5v8H8z" fill="#bdb6cf" /></Svg></ColHead>
                      {columns.map(([c]) => <ColHead key={c} $on={c === 'L'} scope="col">{c}</ColHead>)}
                      <Filler />
                    </tr>
                  </thead>
                  <tbody>
                    {rowHeights.map((h, r) => {
                      const n = 55 + r;
                      return (
                        <tr key={n}>
                          <RowHead scope="row" $h={h} $on={n === 70}>{n}</RowHead>
                          {columns.map(([c], i) => {
                            const id = `${c}${n}`;
                            const next = columns[i + 1] ? cells[`${columns[i + 1][0]}${n}`] : null;
                            const [text, fill, bold] = cells[id] || [];
                            return (
                              <Cell key={id} $fill={fill} $bold={bold} $dr={fill || next} $db={fill || cells[`${c}${n + 1}`]} $sel={id === 'L70'}>{text}</Cell>
                            );
                          })}
                          <Filler />
                        </tr>
                      );
                    })}
                  </tbody>
                </Grid>
                <Banner>les (SI)  imbriqués</Banner>
                <Callout>{calloutFormula}</Callout>
                <Floating $x={829} $y={340}><PasteOptions /></Floating>
                <Floating $x={907} $y={299}><CrossCursor /></Floating>
              </Canvas>
              <VScroll>
                <VSplit />
                <Arrow dir="up" />
                <VTrack><Thumb><Svg w={5} h={5}><path d="M0 .5h5M0 2.500h5M0 4.500h5" stroke="#8a849f" /></Svg></Thumb></VTrack>
                <Arrow dir="down" />
              </VScroll>
            </SheetArea>

            <TabBar>
              <NavButtons>
                <PlainButton aria-label="Première feuille"><Arrow dir="left" bar /></PlainButton>
                <PlainButton aria-label="Feuille précédente"><Arrow dir="left" /></PlainButton>
                <PlainButton aria-label="Feuille suivante"><Arrow dir="right" /></PlainButton>
                <PlainButton aria-label="Dernière feuille"><Arrow dir="right" bar /></PlainButton>
              </NavButtons>
              <SheetTab $on>Feuil1</SheetTab>
              <SheetTab>Feuil2</SheetTab>
              <SheetTab>Feuil3</SheetTab>
              <SheetTab aria-label="Insérer une feuille"><NewSheet /></SheetTab>
              <HScroll>
                <Grip />
                <Arrow dir="left" />
                <HTrack><Thumb><Svg w={5} h={5}><path d="M.5 0v5M2.500 0v5M4.500 0v5" stroke="#8a849f" /></Svg></Thumb></HTrack>
                <Arrow dir="right" />
                <Grip />
              </HScroll>
            </TabBar>

            <Status>
              <span>Prêt</span>
              <MacroArea><PlainButton aria-label="Enregistrer une macro"><Macro /></PlainButton></MacroArea>
              <ViewButtons>
                <ViewButton aria-label="Normal" $on><ViewGlyph kind="grid" /></ViewButton>
                <ViewButton aria-label="Mise en page"><ViewGlyph kind="page" /></ViewButton>
                <ViewButton aria-label="Aperçu des sauts de page"><ViewGlyph kind="break" /></ViewButton>
              </ViewButtons>
              <Zoom>
                <span>100 %</span>
                <RoundSign />
                <input type="range" min="0" max="100" defaultValue="50" />
                <RoundSign plus />
              </Zoom>
            </Status>
          </Inner>
        </Window>
      </Stage>
    </>
  );
}
